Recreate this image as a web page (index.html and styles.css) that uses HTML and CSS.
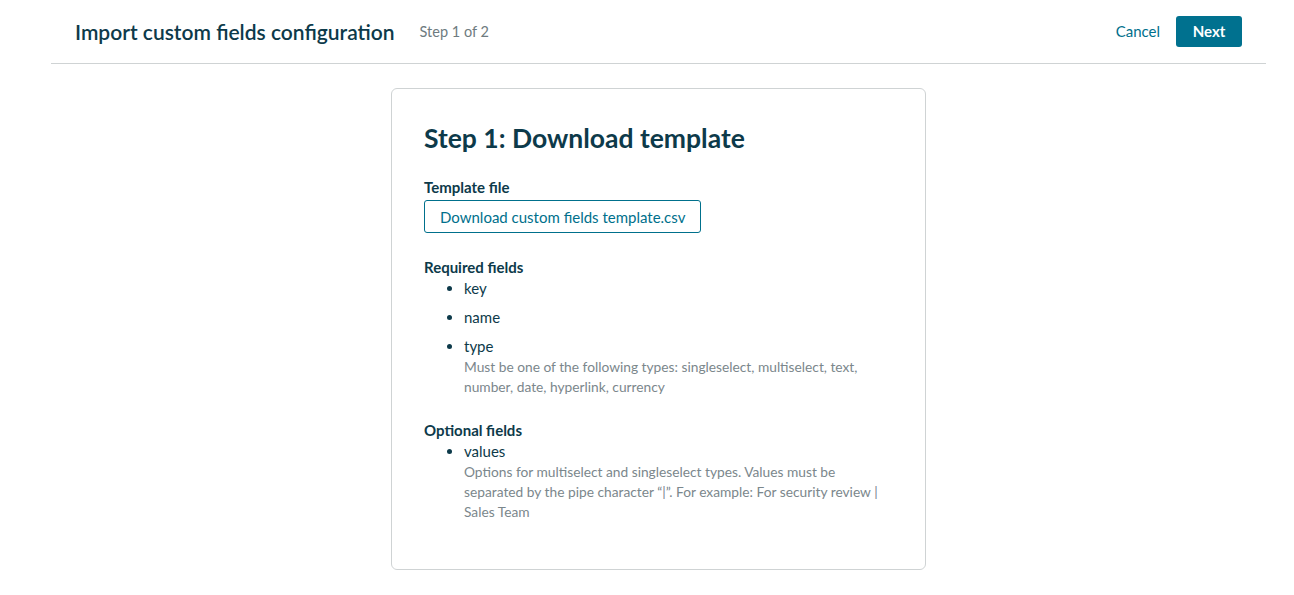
FILE: index.html
```html
<!DOCTYPE html>
<html lang="en">
<head>
    <meta charset="UTF-8">
    <meta name="viewport" content="width=device-width, initial-scale=1.0">
    <title>Import custom fields configuration</title>
    <link rel="stylesheet" href="styles.css">
</head>
<body>

<div class="page">
    <div class="header">
        <div class="header-left">
            <h1>Import custom fields configuration</h1>
            <span class="step">Step 1 of 2</span>
        </div>
        <div class="header-right">
            <a class="cancel" href="#">Cancel</a>
            <button class="next">Next</button>
        </div>
    </div>

    <div class="content">
        <div class="card">
            <h2>Step 1: Download template</h2>

            <div class="section">
                <div class="label">Template file</div>
                <button class="download">Download custom fields template.csv</button>
            </div>

            <div class="section">
                <div class="label">Required fields</div>
                <ul class="fields">
                    <li>key</li>
                    <li>name</li>
                    <li>type
                        <p class="hint">Must be one of the following types: singleselect, multiselect, text, number, date, hyperlink, currency</p>
                    </li>
                </ul>
            </div>

            <div class="section">
                <div class="label">Optional fields</div>
                <ul class="fields">
                    <li>values
                        <p class="hint">Options for multiselect and singleselect types. Values must be separated by the pipe character “|”. For example: For security review | Sales Team</p>
                    </li>
                </ul>
            </div>
        </div>
    </div>
</div>

</body>
</html>
```

FILE: styles.css
```css
body {
    font-family: Lato, "Open Sans", sans-serif;
    margin: 0;
    color: #0d3a4a;
    background: #fff;
}
.page {
    margin: 0 28px 0 51px;
}
.header {
    display: flex;
    justify-content: space-between;
    align-items: center;
    padding: 15px 24px 16px 24px;
    border-bottom: 1px solid #cfd3d4;
    height: 32px;
}
.header-left {
    display: flex;
    align-items: center;
    gap: 25px;
}
.header h1 {
    font-size: 21px;
    font-weight: 600;
    margin: 0;
    color: #0d3a4a;
}
.step {
    font-size: 14.5px;
    color: #6e7b80;
}
.header-right {
    display: flex;
    align-items: center;
    gap: 16px;
}
.cancel {
    color: #00708c;
    text-decoration: none;
    font-size: 15px;
}
.next {
    font-family: inherit;
    font-size: 15px;
    font-weight: 700;
    color: #fff;
    background: #00718f;
    border: none;
    border-radius: 3px;
    width: 66px;
    height: 31px;
    padding: 0;
}
.content {
    display: flex;
    justify-content: center;
    padding-top: 24px;
}
.card {
    width: 469px;
    border: 1px solid #cfd3d4;
    border-radius: 6px;
    padding: 32px 32px 47px 32px;
}
.card h2 {
    font-size: 26.5px;
    font-weight: 700;
    margin: 0 0 22px 0;
    line-height: 34px;
}
.section {
    margin-bottom: 24px;
}
.section:last-child {
    margin-bottom: 0;
}
.label {
    font-size: 15px;
    font-weight: 700;
    line-height: 20px;
    margin-bottom: 3px;
}
.download {
    font-family: inherit;
    font-size: 15px;
    color: #00708c;
    background: #fff;
    border: 1px solid #00708c;
    border-radius: 3px;
    height: 33px;
    padding: 0 15px;
}
.fields {
    margin: 0;
    padding-left: 40px;
    font-size: 15px;
    line-height: 22px;
}
.fields li {
    margin-bottom: 7px;
}
.fields li:last-child {
    margin-bottom: 0;
}
.hint {
    margin: 0;
    font-size: 13.75px;
    color: #7b878c;
    line-height: 19.7px;
}
.section + .section .label {
    margin-bottom: 0;
}
```
